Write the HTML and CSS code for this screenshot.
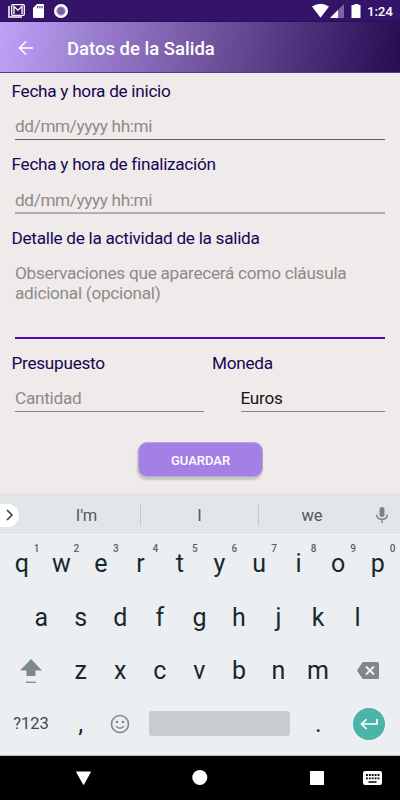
FILE: index.html
```html
<!DOCTYPE html>
<html lang="es">
<head>
<meta charset="utf-8">
<title>Datos de la Salida</title>
<link rel="stylesheet" href="styles.css">
</head>
<body>
<div class="status">
  <svg class="st-left" width="70" height="22" viewBox="0 0 70 22">
    <path d="M9 6v11h13" fill="none" stroke="#fff" stroke-width="1.5"/>
    <rect x="11.700" y="4.700" width="12.600" height="10.600" rx="1" fill="none" stroke="#fff" stroke-width="1.3"/>
    <path d="M14 14V6.500l4 3.700 4-3.700V14" fill="none" stroke="#fff" stroke-width="1.300"/>
    <path d="M37 4h6q1 0 1 1v12q0 1-1 1h-9q-1 0-1-1V8z" fill="#fff"/>
    <path d="M37.700 6v2.300M39.900 6v2.300M42.100 6v2.300" stroke="#341468" stroke-width="1"/>
    <circle cx="61" cy="11" r="7" fill="#fff"/>
    <circle cx="61" cy="11" r="4.200" fill="#7c62a6" stroke="#b5a5cc" stroke-width="1"/>
  </svg>
  <svg class="st-right" width="50" height="22" viewBox="0 0 50 22">
    <path d="M0 6.600Q8.500 .8 17 6.600L8.500 17.800z" fill="#fff"/>
    <path d="M32 4v14H18z" fill="#8065a3"/>
    <path d="M26 10v8H18z" fill="#fff"/>
    <path d="M40.500 5h2V4h4v1h2v13h-9V5z" fill="#fff"/>
  </svg>
  <span class="clock">1:24</span>
</div>
<header class="appbar">
  <svg class="back" width="16" height="16" viewBox="0 0 16 16"><path d="M15 8H2M8 1.500L1.500 8 8 14.500" fill="none" stroke="#fff" stroke-width="1.500"/></svg>
  <h1>Datos de la Salida</h1>
</header>
<main class="form">
  <label>Fecha y hora de inicio</label>
  <div class="field">dd/mm/yyyy hh:mi</div>
  <label>Fecha y hora de finalización</label>
  <div class="field light">dd/mm/yyyy hh:mi</div>
  <label>Detalle de la actividad de la salida</label>
  <div class="field area">Observaciones que aparecerá como cláusula<br>adicional (opcional)</div>
  <div class="pair">
    <div class="budget"><label>Presupuesto</label><div class="field">Cantidad</div></div>
    <div class="currency"><label>Moneda</label><div class="field value">Euros</div></div>
  </div>
  <button class="save">GUARDAR</button>
</main>
<section class="keyboard">
  <div class="suggest">
    <div class="chev"><svg width="19" height="22" viewBox="0 0 19 22"><path d="M7 6l5 5-5 5" fill="none" stroke="#37474f" stroke-width="1.700"/></svg></div>
    <span class="word first">I'm</span><span class="word">I</span><span class="word last">we</span>
    <svg class="mic" width="14" height="18" viewBox="0 0 14 18"><rect x="4.500" y="1" width="5" height="10" rx="2.500" fill="#78858b"/><path d="M1.700 8.500c0 3 2.300 4.800 5.300 4.800s5.300-1.800 5.300-4.800M7 13.300V17" fill="none" stroke="#78858b" stroke-width="1.400"/></svg>
  </div>
  <div class="row r1">
    <span class="key">q<sup>1</sup></span><span class="key">w<sup>2</sup></span><span class="key">e<sup>3</sup></span><span class="key">r<sup>4</sup></span><span class="key">t<sup>5</sup></span><span class="key">y<sup>6</sup></span><span class="key">u<sup>7</sup></span><span class="key">i<sup>8</sup></span><span class="key">o<sup>9</sup></span><span class="key">p<sup>0</sup></span>
  </div>
  <div class="row r2">
    <span class="key">a</span><span class="key">s</span><span class="key">d</span><span class="key">f</span><span class="key">g</span><span class="key">h</span><span class="key">j</span><span class="key">k</span><span class="key">l</span>
  </div>
  <div class="row r3">
    <span class="wide"><svg width="22" height="26" viewBox="0 0 22 26"><path d="M11 1l11 11.500h-6.500V18h-9v-5.500H0z" fill="#7c898f"/><path d="M6 24.300h10" stroke="#7c898f" stroke-width="1.300"/></svg></span>
    <span class="key">z</span><span class="key">x</span><span class="key">c</span><span class="key">v</span><span class="key">b</span><span class="key">n</span><span class="key">m</span>
    <span class="wide del"><svg width="22" height="17" viewBox="0 0 22 17"><path d="M6.500 0H20.500Q22 0 22 1.500V15.500Q22 17 20.500 17H6.500Q5.500 17 5 16L0 8.500 5 1Q5.500 0 6.500 0z" fill="#7c898f"/><path d="M9 4.500l8 8M17 4.500l-8 8" stroke="#eceff1" stroke-width="2"/></svg></span>
  </div>
  <div class="row r4">
    <span class="wide sym">?123</span>
    <span class="key">,</span>
    <span class="key"><svg class="emoji" width="20" height="20" viewBox="0 0 20 20"><circle cx="10" cy="10" r="8.500" fill="none" stroke="#7c898f" stroke-width="1.600"/><circle cx="7" cy="8" r="1.300" fill="#7c898f"/><circle cx="13" cy="8" r="1.300" fill="#7c898f"/><path d="M6 12.300q4 3.800 8 0" fill="none" stroke="#7c898f" stroke-width="1.500"/></svg></span>
    <span class="space"></span>
    <span class="key">.</span>
    <span class="wide"><span class="enter"><svg width="18" height="12" viewBox="0 0 18 12"><path d="M17 1v5H2M6.500 1.300L1.500 6l5 5" fill="none" stroke="#fff" stroke-width="1.700"/></svg></span></span>
  </div>
</section>
<nav class="nav">
  <svg width="400" height="44" viewBox="0 0 400 44">
    <path d="M76.500 15.500h14q.7 0 .4.600l-6.800 12.300q-.5.800-1 0L76.100 16.100q-.3-.6.400-.6z" fill="#fff"/>
    <circle cx="199.800" cy="21.500" r="7.500" fill="#fff"/>
    <rect x="310" y="15" width="14" height="14" rx=".5" fill="#fff"/>
    <rect x="363" y="15" width="19" height="14" rx="2" fill="#fff"/>
    <path d="M366 19h13.500M366 22.300h13.500" stroke="#000" stroke-width="1.800" stroke-dasharray="1.800 1.100"/>
    <path d="M368.500 26h8" stroke="#000" stroke-width="1.500"/>
  </svg>
</nav>
</body>
</html>
```
FILE: styles.css
```css
* { box-sizing: border-box; }
body {
  margin: 0;
  width: 400px;
  height: 800px;
  overflow: hidden;
  font-family: Roboto, "Liberation Sans", sans-serif;
  background: #efebea;
}
svg { display: block; flex: none; }
.status {
  height: 22px;
  display: flex;
  background: #341468;
  border-bottom: 1px solid #280b5b;
}
.st-right { margin-left: 242px; }
.clock {
  margin-left: 5px;
  color: #fff;
  font-size: 13.4px;
  font-weight: 500;
  letter-spacing: -0.2px;
  line-height: 23px;
}
.appbar {
  height: 51px;
  display: flex;
  align-items: center;
  padding: 2px 0 0 18px;
  background: linear-gradient(100deg, #bea2f7 0%, #765aa5 48%, #260c53 100%);
  border-bottom: 1px solid #5b3391;
}
.appbar h1 {
  margin: 2px 0 0 33px;
  color: #fff;
  font-size: 18.5px;
  font-weight: 500;
  line-height: 24px;
}
.form {
  height: 420px;
  padding: 8px 15px 0 11.5px;
}
label {
  display: block;
  height: 20px;
  font-size: 17.2px;
  letter-spacing: -0.28px;
  line-height: 20px;
  color: #170553;
  white-space: nowrap;
}
.field {
  height: 39px;
  margin: 0 0 14px 3.5px;
  padding-top: 15px;
  border-bottom: 1px solid #626061;
  color: #8d8a89;
  font-size: 17.2px;
  letter-spacing: -0.27px;
  line-height: 20px;
  white-space: nowrap;
}
.form > .field:not(.area) { letter-spacing: -0.36px; }
.light {
  height: 40px;
  padding-top: 16px;
  border-bottom: 2px solid #b2afae;
}
.area {
  height: 91px;
  border-bottom: 2px solid #5209b5;
}
.pair { display: flex; }
.budget { width: 192px; }
.currency { width: 173px; margin-left: 8.5px; }
.currency .field { margin-left: 28.5px; }
.pair .field { border-color: #858281; }
.pair .value { color: #151515; }
.save {
  display: block;
  width: 125px;
  height: 35px;
  margin: 16px 0 0 126.5px;
  padding: 1px 0 0;
  border: 1px solid #b3abc0;
  border-radius: 9px;
  background: #a47fe6;
  box-shadow: -1px 3px 2px #c8c5c4;
  color: #fff;
  font: 500 13px Roboto, sans-serif;
}
.keyboard {
  height: 263px;
  background: #eceff1;
  border-bottom: 1px solid #b9bcbe;
}
.suggest {
  height: 42px;
  display: flex;
  align-items: center;
  padding-top: 2px;
  background: #e2e6e8;
  border-top: 1px solid #e5e5e6;
  border-bottom: 1px solid #f5f7f8;
}
.chev {
  width: 19px;
  height: 23px;
  border-radius: 0 12px 12px 0;
  background: #fff;
}
.word {
  width: 118px;
  height: 22px;
  border-right: 1px solid #c4c9cc;
  color: #4c5b62;
  font-size: 16.5px;
  line-height: 23px;
  text-align: center;
}
.word.first { width: 122px; padding-left: 14px; }
.word.last { width: 106px; border: 0; }
.mic { margin-left: 10px; }
.row {
  display: flex;
  height: 54px;
  align-items: center;
}
.key {
  position: relative;
  display: flex;
  justify-content: center;
  width: 39.55px;
  color: #17282f;
  font-size: 25px;
  line-height: 30px;
}
.key sup {
  position: absolute;
  right: 2px;
  top: -6px;
  color: #56646a;
  font-size: 10px;
  font-weight: 500;
  line-height: 12px;
}
.r1 { padding: 4px 0 0 2px; }
.r2 { padding: 3px 0 0 21.5px; }
.r3 { padding: 1px 0 0; }
.r4 { height: 53px; }
.wide {
  display: flex;
  justify-content: center;
  width: 61px;
}
.sym { color: #3b4b52; font-size: 16.5px; padding-left: 1px; }
.space {
  width: 141px;
  height: 25px;
  margin: 0 8.7px;
  border-radius: 3px;
  background: #c8cccf;
}
.enter {
  display: flex;
  width: 32px;
  height: 32px;
  align-items: center;
  justify-content: center;
  border-radius: 50%;
  background: #4bb4a9;
}
.nav { height: 44px; background: #000; }
```
